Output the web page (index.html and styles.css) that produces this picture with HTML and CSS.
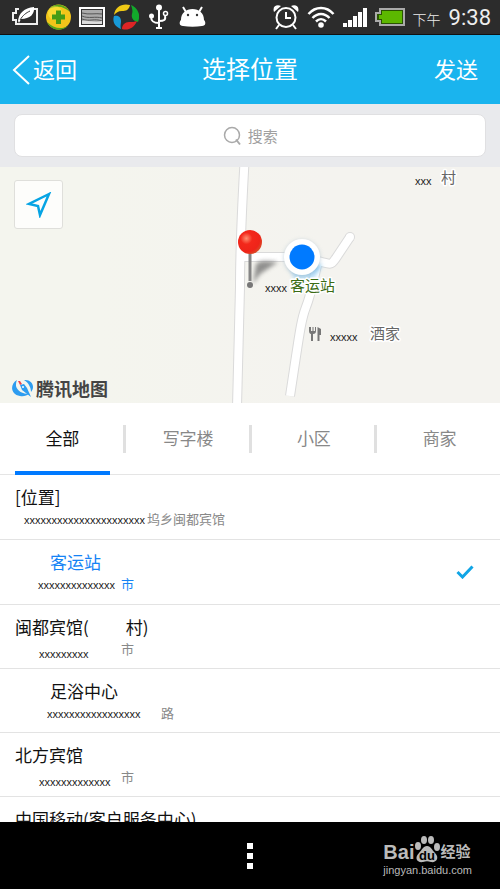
FILE: index.html
```html
<!DOCTYPE html>
<html lang="zh-CN">
<head>
<meta charset="utf-8">
<meta name="viewport" content="width=device-width, initial-scale=1">
<title>选择位置</title>
<link rel="stylesheet" href="styles.css">
</head>
<body>
<div class="statusbar">
	<div class="status-left">
		<svg width="26" height="20" viewBox="0 0 26 20">
			<path d="M7 2H4v4H1v7h3v4h21V2h-3" fill="none" stroke="#eee" stroke-width="2"/>
			<path d="M6 14C7 6 12 1 22 0c1 7-4 12-13 12l-2 4z" fill="#fff"/>
			<path d="M8 13C11 8 14 6 18 4" stroke="#333" fill="none"/>
		</svg>
		<svg width="25" height="26" viewBox="0 0 25 26">
			<circle cx="12.500" cy="13" r="12.500" fill="#f2c51a"/>
			<path d="M3 5C9-2 20 0 24 8c-5-4-9-6-14-5-3 0-5 1-7 2z" fill="#58a51c"/>
			<path d="M1 18c6 6 14 8 21 4-6 6-17 5-21-4z" fill="#58a51c"/>
			<circle cx="9" cy="9" r="7" fill="#fff04a" opacity=".5"/>
			<path d="M10 6.500h5v4h4v5h-4V20h-5v-4.500H6v-5h4z" fill="#459b16"/>
		</svg>
		<svg width="26" height="20" viewBox="0 0 26 20">
			<rect x="1" y="1" width="24" height="18" fill="#333" stroke="#fff" stroke-width="2"/>
			<rect x="3" y="3" width="20" height="14" fill="#aaa"/>
			<path d="M3 6c7 2 13 0 20 1M3 9c6 3 14 0 20 2M3 12c8 3 12-1 20 2" fill="none" stroke="#555"/>
			<path d="M3 14c8-1 12 2 20 0v3H3z" fill="#ddd"/>
		</svg>
		<svg width="26" height="26" viewBox="0 0 26 26">
			<path d="M1 11C2 3 9-1 17 1c-1 5-4 6-8 6-4 0-6 2-8 4z" fill="#efc915"/>
			<path d="M18 1c7 3 10 10 7 17-5-1-7-4-6-8 1-4 0-6-1-9z" fill="#12a92b"/>
			<path d="M24 17c-3 7-9 10-15 8 0-4 3-7 7-7 3 0 6 0 8-1z" fill="#dd2525"/>
			<path d="M1 12c3-1 7 0 7 5 0 3-1 5 0 8-6-2-9-7-7-13z" fill="#179ad8"/>
		</svg>
		<svg width="24" height="26" viewBox="0 0 24 26">
			<path d="M12 3v21M4 12c0 5 2 7 8 7M18 12c1 4-1 5-6 5" fill="none" stroke="#fff" stroke-width="2"/>
			<circle cx="12" cy="3.500" r="3" fill="#fff"/>
			<circle cx="4.500" cy="12" r="2.500" fill="#fff"/>
			<circle cx="18.500" cy="9.500" r="2" fill="none" stroke="#fff" stroke-width="1.500"/>
			<path d="M9 23h6v2H9z" fill="#fff"/>
		</svg>
		<svg width="27" height="22" viewBox="0 0 27 22">
			<path d="M4 1l3 5M23 1l-3 5" stroke="#fff" stroke-width="2"/>
			<path d="M2 14C2 7 7 3 13.500 3S25 7 25 14c2 2 2 6-2 6-6 1-13 1-19 0-4 0-4-4-2-6z" fill="#fff"/>
			<circle cx="9" cy="9" r="1.200" fill="#333"/>
			<circle cx="18" cy="9" r="1.200" fill="#333"/>
		</svg>
	</div>
	<div class="status-right">
		<svg width="26" height="26" viewBox="0 0 26 26">
			<circle cx="13" cy="13.500" r="9.500" fill="none" stroke="#fff" stroke-width="2"/>
			<path d="M13 8v6h5M6 21l-3 4M20 21l3 4" fill="none" stroke="#fff" stroke-width="2"/>
			<path d="M1 8C-1 2 4 0 8 2zM25 8c2-6-3-8-7-6z" fill="#fff"/>
		</svg>
		<svg width="28" height="22" viewBox="0 0 28 22">
			<path d="M1.500 8c7-8 18-8 25 0M5.500 12c5-5.500 12-5.500 17 0M9 15.500c3-3 7-3 10 0" fill="none" stroke="#fff" stroke-width="2.500"/>
			<circle cx="14" cy="19" r="2.800" fill="#fff"/>
		</svg>
		<svg width="24" height="20" viewBox="0 0 24 20">
			<path d="M0 16h4v4H0zM5 13h4v7H5zM10 9h4v11h-4zM15 5h4v15h-4zM20 1h4v19h-4z" fill="#fff"/>
		</svg>
		<svg width="30" height="18" viewBox="0 0 30 18">
			<path d="M5 1h24v16H5v-4H1V5h4z" fill="#295400" stroke="#aaa" stroke-width="2"/>
			<path d="M7 3h20v12H7v-4H4V7h3z" fill="#5cb800"/>
		</svg>
		<span class="ampm">下午</span>
		<span class="clock">9:38</span>
	</div>
</div>

<header class="navbar">
	<button class="back" type="button">
		<svg width="18" height="30" viewBox="0 0 18 30"><path d="M17 1L2 15l15 14" fill="none" stroke="#fff" stroke-width="2"/></svg>
		<span>返回</span>
	</button>
	<h1>选择位置</h1>
	<button class="send" type="button">发送</button>
</header>

<div class="search">
	<label class="searchbox">
		<svg width="19" height="20" viewBox="0 0 19 20"><circle cx="9" cy="9" r="7.500" fill="none" stroke="#a9a9a9" stroke-width="1.500"/><path d="M13 13.500l4 5" stroke="#a9a9a9" stroke-width="2"/></svg>
		<input type="text" placeholder="搜索" aria-label="搜索">
	</label>
</div>

<div class="map">
	<svg class="mapview" width="100%" height="236" viewBox="0 0 500 236" preserveAspectRatio="xMidYMid slice">
		<defs>
			<linearGradient id="land"><stop offset=".4" stop-color="#f4f5ee"/><stop offset=".55" stop-color="#f4f3ef"/></linearGradient>
			<linearGradient id="beam" x1="0" y1="0" x2="0" y2="1"><stop offset="0" stop-color="#7cc4f5"/><stop offset="1" stop-color="#d8eefa" stop-opacity=".4"/></linearGradient>
			<radialGradient id="ball" cx=".35" cy=".35" r=".7"><stop offset="0" stop-color="#ff8f70"/><stop offset=".35" stop-color="#f3281b"/><stop offset=".8" stop-color="#ee2419"/><stop offset="1" stop-color="#d94a28"/></radialGradient>
			<filter id="soft" x="-50%" y="-50%" width="200%" height="200%"><feGaussianBlur stdDeviation="2"/></filter>
			<path id="roads" d="M244.500-5C242 40 240 80 240 120L237 240M243 90L284 90C300 90 310 91 318 94C332 98 331 98 336 91L350 70M318 94C313 115 311 128 306 140C301 153 300 163 290 229"/>
		</defs>
		<rect x="-500" width="1500" height="236" fill="url(#land)"/>
		<g fill="none" stroke-linejoin="round">
			<use href="#roads" stroke="#dadada" stroke-width="10"/>
			<circle cx="350" cy="70" r="5" fill="#dadada"/>
			<use href="#roads" stroke="#fff" stroke-width="8"/>
			<circle cx="350" cy="70" r="4" fill="#fff"/>
		</g>
		<path d="M290 98L322 98L308 122H297z" fill="url(#beam)" filter="url(#soft)"/>
		<circle cx="302" cy="91" r="18" fill="#9cb4c4" filter="url(#soft)" opacity=".6"/>
		<circle cx="302" cy="90" r="18" fill="#fff"/>
		<circle cx="302" cy="90" r="12.500" fill="#007aff"/>
		<path d="M253 117L256 97C263 92 270 95 278 95L260 107z" fill="#666" opacity=".7" filter="url(#soft)"/>
		<path d="M250 86v28" stroke="#858585" stroke-width="3"/>
		<circle cx="250" cy="118" r="3" fill="#777"/>
		<circle cx="250" cy="75" r="12" fill="url(#ball)"/>
		<g class="labels">
			<text x="441" y="16">村</text>
			<text x="370" y="172">酒家</text>
			<text class="station" x="290" y="124">客运站</text>
			<text class="masked" x="415" y="18">xxx</text>
			<text class="masked" x="265" y="125">xxxx</text>
			<text class="masked" x="330" y="174">xxxxx</text>
		</g>
		<path d="M309 160v4c0 2 1 3 2 3v7h2v-7c2 0 3-1 3-3v-4h-1v4h-1.500v-4h-1v4H311v-4zM317.500 160v14h2v-6h1.500v-6z" fill="#777"/>
	</svg>
	<button class="locate" type="button" aria-label="定位">
		<svg width="26" height="26" viewBox="0 0 26 26"><path d="M23 2L3 12l9 2 2 9z" fill="none" stroke="#06a4e4" stroke-width="2.500"/></svg>
	</button>
	<div class="maplogo">
		<svg width="23" height="18" viewBox="0 0 23 18">
			<path d="M6 1C-1 5-1 15 9 17c4 1 7-1 9-2-6 0-12-3-13-8 0-2 0-4 1-6z" fill="#2d9cf0"/>
			<path d="M13 1c7-1 12 6 7 12 0-4-2-9-7-12z" fill="#2d9cf0"/>
			<path d="M7 2l2 0 2 3-2 1z" fill="#f0444d"/>
			<path d="M9 6l4-1 3 4 4 9-9-7z" fill="#2d9cf0"/>
			<circle cx="12" cy="8" r="1" fill="#fff"/>
		</svg>
		<span>腾讯地图</span>
	</div>
</div>

<nav class="tabs">
	<button class="tab active" type="button">全部</button>
	<span class="divider"></span>
	<button class="tab" type="button">写字楼</button>
	<span class="divider"></span>
	<button class="tab" type="button">小区</button>
	<span class="divider"></span>
	<button class="tab" type="button">商家</button>
</nav>

<ul class="places">
	<li class="place tall">
		<div class="name">[位置]</div>
		<div class="address"><span class="mask mask-near">xxxxxxxxxxxxxxxxxxxxxx</span><span>坞乡闽都宾馆</span></div>
	</li>
	<li class="place tall selected">
		<div class="name indent">客运站</div>
		<div class="address"><span class="mask">xxxxxxxxxxxxxx</span><span>市</span></div>
		<svg class="check" width="18" height="14" viewBox="0 0 18 14"><path d="M1.500 7l5 5L16.500 1.500" fill="none" stroke="#10a5e6" stroke-width="3"/></svg>
	</li>
	<li class="place">
		<div class="name">闽都宾馆(<span class="blank"></span>村)</div>
		<div class="address"><span class="mask low">xxxxxxxxx</span><span>市</span></div>
	</li>
	<li class="place">
		<div class="name indent">足浴中心</div>
		<div class="address"><span class="mask mask-far">xxxxxxxxxxxxxxxxx</span><span>路</span></div>
	</li>
	<li class="place">
		<div class="name">北方宾馆</div>
		<div class="address"><span class="mask low">xxxxxxxxxxxxx</span><span>市</span></div>
	</li>
	<li class="place">
		<div class="name">中国移动(客户服务中心)</div>
	</li>
</ul>

<footer class="bottombar">
	<button class="more" type="button" aria-label="更多"><i></i><i></i><i></i></button>
	<div class="credit">
		<div class="brand">
			<span class="bai">Bai</span>
			<svg width="26" height="28" viewBox="0 0 26 28">
				<g fill="#bbb">
					<ellipse cx="4" cy="11" rx="3" ry="4"/>
					<ellipse cx="10" cy="5" rx="3" ry="4"/>
					<ellipse cx="17" cy="5" rx="3" ry="4"/>
					<ellipse cx="23" cy="12" rx="3" ry="4"/>
					<path d="M13 11c4 0 5 4 8 7 5 5 1 10-4 9-3-1-5-1-8 0-6 1-9-4-4-9 3-3 4-7 8-7z"/>
				</g>
				<text class="du" x="13" y="25" text-anchor="middle">du</text>
			</svg>
			<span class="jingyan">经验</span>
		</div>
		<div class="url">jingyan.baidu.com</div>
	</div>
</footer>
</body>
</html>
```
FILE: styles.css
```css
* {
	box-sizing: border-box;
}
html, body {
	margin: 0;
	height: 100%;
}
body {
	display: flex;
	flex-direction: column;
	overflow: hidden;
	background: #fff;
	color: #111;
	font-family: "Liberation Sans", "Noto Sans CJK SC", sans-serif;
}
button {
	border: 0;
	padding: 0;
	background: none;
	color: inherit;
	font: inherit;
}
svg {
	display: block;
	flex: none;
}

/* status bar */
.statusbar {
	flex: none;
	display: flex;
	justify-content: space-between;
	height: 35px;
	padding: 0 9px 0 12px;
	background: #2c2c2c;
	border-bottom: 1px solid #111;
	color: #eee;
}
.status-left, .status-right {
	display: flex;
	align-items: center;
	gap: 8px;
}
.ampm {
	padding-top: 3px;
	font-family: "Noto Sans CJK SC", sans-serif;
	font-size: 14px;
	font-weight: 300;
}
.clock {
	font-family: Roboto, sans-serif;
	font-size: 22px;
}

/* title bar */
.navbar {
	flex: none;
	display: grid;
	grid-template-columns: 1fr auto 1fr;
	align-items: center;
	height: 69px;
	padding: 0 12px;
	background: #1ab4ee;
	color: #fff;
	font-family: "Noto Sans CJK SC", sans-serif;
	font-size: 22px;
}
.navbar h1, .back span, .send {
	padding-bottom: 4px;
}
.navbar h1 {
	margin: 0;
	font-size: 24px;
	font-weight: 400;
}
.back {
	justify-self: start;
	display: flex;
	align-items: center;
	gap: 3px;
}
.send {
	justify-self: end;
	margin-right: 10px;
}

/* search */
.search {
	flex: none;
	padding: 10px 14px;
	background: #e9eaed;
}
.searchbox {
	display: flex;
	align-items: center;
	gap: 6px;
	height: 43px;
	padding-left: 44%;
	background: #fff;
	border: 1px solid #e0e0e2;
	border-radius: 8px;
}
.searchbox input {
	flex: 1;
	min-width: 0;
	padding: 0;
	border: 0;
	outline: 0;
	background: none;
	font: 15px "Noto Sans CJK SC", sans-serif;
}
.searchbox input::placeholder {
	color: #a0a0a0;
}

/* map */
.map {
	flex: none;
	position: relative;
	background: #f4f3ef;
}
.labels {
	font: 15px "Noto Sans CJK SC", sans-serif;
	fill: #666;
	stroke: #fff;
	stroke-width: 3px;
	stroke-linejoin: round;
	paint-order: stroke;
}
.labels .station {
	fill: #3b6b14;
}
.labels .masked {
	font: 11px "Liberation Sans", sans-serif;
	fill: #222;
	stroke: none;
}
.locate {
	position: absolute;
	top: 13px;
	left: 14px;
	display: flex;
	align-items: center;
	justify-content: center;
	width: 49px;
	height: 49px;
	background: #fdfdfb;
	border: 1px solid #dfdfdb;
	border-radius: 3px;
}
.maplogo {
	position: absolute;
	left: 11px;
	bottom: 5px;
	display: flex;
	align-items: center;
	gap: 2px;
	color: #444;
	font: bold 18px/20px "Noto Sans CJK SC", sans-serif;
}

/* tabs */
.tabs {
	flex: none;
	display: flex;
	align-items: center;
	height: 72px;
	border-bottom: 1px solid #e5e5e5;
}
.tab {
	flex: 1;
	height: 72px;
	margin: 0 13px 0 15px;
	border-top: 2px solid transparent;
	border-bottom: 4px solid transparent;
	color: #888;
	font: 17px "Noto Sans CJK SC", sans-serif;
}
.tab.active {
	border-bottom-color: #007aff;
	color: #111;
}
.divider {
	width: 3px;
	height: 28px;
	background: #e0e0e0;
}

/* list */
.places {
	flex: 1;
	min-height: 0;
	overflow: hidden;
	margin: 0;
	padding: 0;
	list-style: none;
	font-family: "Noto Sans CJK SC", sans-serif;
}
.place {
	display: grid;
	grid-template-columns: 1fr auto;
	grid-template-rows: 24px 20px;
	align-content: start;
	height: 64px;
	padding: 10px 26px 0 15px;
	border-bottom: 1px solid #e3e3e3;
}
.place.tall {
	height: 65px;
}
.name {
	grid-column: 1;
	font-size: 17px;
	line-height: 24px;
}
.indent {
	padding-left: 35px;
}
.blank {
	display: inline-block;
	width: 37px;
}
.address {
	grid-column: 1;
	display: flex;
	align-items: baseline;
	color: #888;
	font-size: 13px;
	line-height: 20px;
}
.mask {
	width: 106px;
	padding-left: 23px;
	color: #222;
	font: 11px/20px "Liberation Sans", sans-serif;
}
.mask-near {
	width: 132px;
	padding-left: 9px;
}
.mask-far {
	width: 146px;
	padding-left: 32px;
}
.mask.low {
	align-self: flex-end;
	margin-bottom: -5px;
	padding-left: 24px;
}
.selected .name, .selected .address {
	color: #1583f5;
}
.check {
	grid-column: 2;
	grid-row: 1 / 3;
	align-self: center;
}

/* bottom bar */
.bottombar {
	flex: none;
	display: grid;
	grid-template-columns: 1fr auto 1fr;
	align-items: center;
	height: 67px;
	padding: 0 28px;
	background: #000;
}
.more {
	grid-column: 2;
	display: grid;
	gap: 4px;
}
.more i {
	width: 6px;
	height: 6px;
	background: #fff;
}
.credit {
	justify-self: end;
	color: #bbb;
}
.brand {
	display: flex;
	align-items: flex-end;
	height: 28px;
}
.bai {
	font: bold 20px/22px "Liberation Sans", sans-serif;
}
.du {
	font: bold 13px "Liberation Sans", sans-serif;
	fill: #000;
}
.jingyan {
	font: bold 15px/24px "Noto Sans CJK SC", sans-serif;
}
.url {
	font: 11px/14px "Liberation Sans", sans-serif;
}
```
